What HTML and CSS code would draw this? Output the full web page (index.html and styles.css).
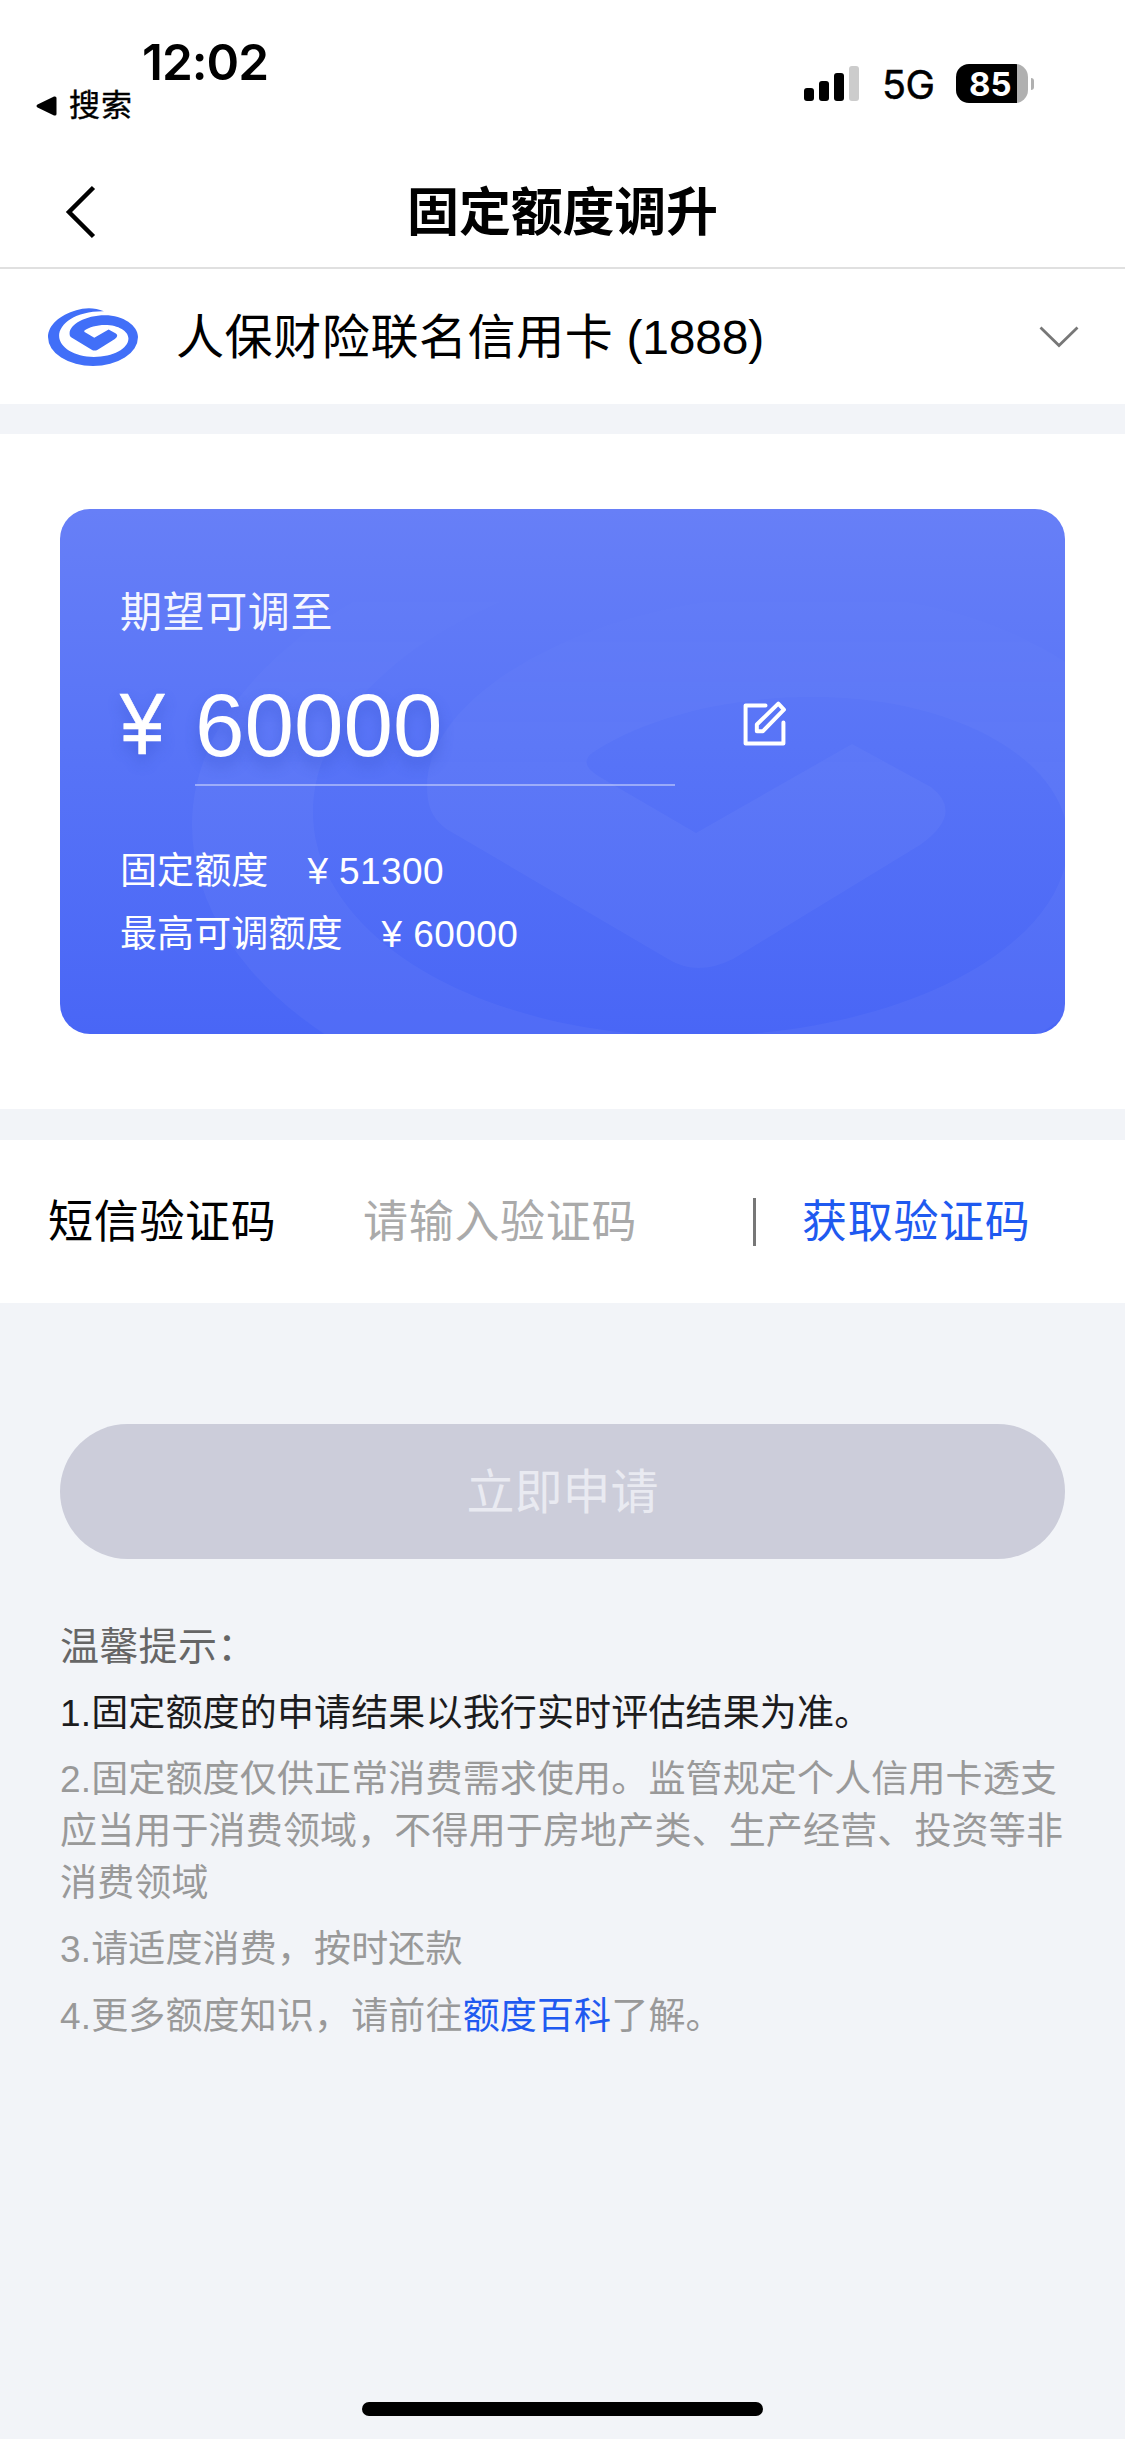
FILE: index.html
```html
<!DOCTYPE html>
<html lang="zh-CN">
<head>
<meta charset="utf-8">
<title>固定额度调升</title>
<link rel="stylesheet" href="styles.css">
</head>
<body>
<svg width="0" height="0" class="defs" aria-hidden="true">
  <symbol id="swirl" viewBox="192 516 980 614" preserveAspectRatio="none">
    <path d="M801 550C700 508 590 510 500 540C320 590 192 700 192 824A490 306 0 0 0 1172 824C1172 700 1010 592 812 592C600 592 427 690 427 785C427 805 432 818 448 829L668 958Q697 976 733 958L920 844Q965 812 931 786L852 743L696 832L600 776Q578 763 592 752C640 720 720 696 812 696C960 696 1068 762 1068 840C1068 946 900 1035 692 1035C480 1035 313 935 313 811C313 680 500 545 801 550Z"/>
  </symbol>
</svg>
<div class="screen">
  <header class="status">
    <div class="status-left">
      <div class="time">12:02</div>
      <div class="return">
        <svg width="21" height="20" viewBox="0 0 21 20"><path d="M1.5 8.6 18 .6Q20.500 0 20.500 2V18Q20.500 20 18 19.400L1.500 11.400Q-.5 10 1.500 8.600Z"/></svg>
        <span>搜索</span>
      </div>
    </div>
    <div class="status-right">
      <div class="signal"><i class="s1"></i><i class="s2"></i><i class="s3"></i><i class="s4"></i></div>
      <span class="net">5G</span>
      <div class="battery"><span>85</span></div>
      <i class="nub"></i>
    </div>
  </header>
  <nav class="nav">
    <svg class="back" width="32" height="54" viewBox="0 0 32 54"><path d="M28.500 2.500 4 27 28.500 51.500" fill="none" stroke="#000" stroke-width="4.500"/></svg>
    <h1>固定额度调升</h1>
  </nav>
  <section class="picker">
    <svg class="logo" width="90" height="58"><use href="#swirl"/></svg>
    <span class="picker-name">人保财险联名信用卡<span class="digits"> (1888)</span></span>
    <svg class="down" width="40" height="22" viewBox="0 0 40 22"><path d="M1.500 1.500 20 19.500 38.500 1.500" fill="none" stroke="#777" stroke-width="2.800"/></svg>
  </section>
  <section class="quota">
    <div class="card">
      <svg class="mark" viewBox="60 508 1005 526"><use href="#swirl" x="192" y="516" width="980" height="614"/></svg>
      <div class="card-title">期望可调至</div>
      <div class="amount">
        <span class="yen">¥</span>
        <span class="value">60000</span>
        <svg class="edit" width="45" height="45" viewBox="0 0 44 44" fill="none" stroke="#fff" stroke-width="3.900" stroke-linejoin="round" stroke-linecap="round"><path d="M23 4.500H3.500V41.500H40.500V21"/><path d="M14.500 29.500V23L35.500 2.500 41 8.500 20.500 29.500Z"/></svg>
      </div>
      <div class="line"><span>固定额度</span><span>¥ 51300</span></div>
      <div class="line"><span>最高可调额度</span><span>¥ 60000</span></div>
    </div>
  </section>
  <section class="sms">
    <span class="sms-label">短信验证码</span>
    <span class="sms-input">请输入验证码</span>
    <i class="bar"></i>
    <a class="sms-get">获取验证码</a>
  </section>
  <div class="submit">立即申请</div>
  <section class="tips">
    <h2>温馨提示：</h2>
    <p class="strong">1.固定额度的申请结果以我行实时评估结果为准。</p>
    <p>2.固定额度仅供正常消费需求使用。监管规定个人信用卡透支<br>应当用于消费领域，不得用于房地产类、生产经营、投资等非<br>消费领域</p>
    <p>3.请适度消费，按时还款</p>
    <p>4.更多额度知识，请前往<a>额度百科</a>了解。</p>
  </section>
  <div class="home"></div>
</div>
</body>
</html>
```

FILE: styles.css
```css
* { box-sizing: border-box; margin: 0; padding: 0; }
body { background: #f2f4f8; font-family: "Liberation Sans", "Noto Sans CJK SC", sans-serif; color: #000; }
.defs { display: block; }
.screen { width: 1125px; height: 2439px; display: flex; flex-direction: column; overflow: hidden; white-space: nowrap; }
svg, i { display: block; flex: none; }

.status { height: 157px; background: #fff; display: flex; justify-content: space-between; }
.status-left { padding: 32px 0 0 36px; }
.time { font: 600 49.500px/60px Inter, sans-serif; padding-left: 106px; letter-spacing: -1px; }
.return { display: flex; align-items: center; gap: 12px; font-size: 31px; line-height: 32px; letter-spacing: 1px; margin-top: -2px; -webkit-text-stroke: 0.400px #000; }
.status-right { height: 39px; margin: 64px 91px 0 0; display: flex; align-items: center; }
.signal { display: flex; align-items: flex-end; gap: 5px; height: 35px; margin-right: 23px; }
.signal i { width: 10px; border-radius: 3px; background: #000; }
.signal .s1 { height: 13px; }
.signal .s2 { height: 20px; }
.signal .s3 { height: 28px; }
.signal .s4 { height: 35px; background: #ccc; }
.net { font: 400 39.500px/40px Inter, sans-serif; letter-spacing: -0.500px; width: 52px; margin-right: 22px; padding-top: 3px; -webkit-text-stroke: 0.500px #000; }
.battery { width: 72px; height: 39px; border-radius: 13px; background: linear-gradient(90deg, #000 61px, #b0b0b0 61px); color: #fff; font: 700 33px/40px Inter, sans-serif; padding-left: 13px; }
.nub { width: 3px; height: 12px; margin-left: 3px; border-radius: 0 4px 4px 0; background: #b0b0b0; }

.nav { height: 112px; background: #fff; border-bottom: 2px solid #e0e0e0; display: grid; grid-template-columns: 110px 1fr 110px; align-items: center; }
.back { margin-left: 65px; }
.nav h1 { font-size: 52px; line-height: 60px; font-weight: 700; text-align: center; letter-spacing: -0.200px; padding-top: 2px; }

.picker { height: 135px; background: #fff; display: flex; align-items: center; padding: 0 46px 0 48px; }
.logo { fill: #416ff8; }
.picker-name { flex: 1; margin-left: 38px; font-size: 48px; letter-spacing: 0.600px; line-height: 60px; padding-top: 2px; }
.digits { letter-spacing: -0.200px; }

.quota { height: 675px; margin-top: 30px; background: #fff; padding: 75px 60px 0; }
.card { position: relative; height: 525px; border-radius: 30px; overflow: hidden; padding: 79px 60px 0; color: #fff; background: linear-gradient(#677ff7, #5874f7 45%, #4966f6); }
.card > div { position: relative; }
.mark { position: absolute; inset: 0; width: 1005px; height: 526px; fill: rgba(255, 255, 255, 0.04); -webkit-mask-image: linear-gradient(transparent 12%, #000 50%); mask-image: linear-gradient(transparent 12%, #000 50%); }
.card-title { font-size: 42px; line-height: 50px; letter-spacing: 0.600px; color: #f4f6ff; }
.amount { height: 149px; display: flex; align-items: flex-start; text-shadow: 0 8px 14px rgba(50, 80, 200, 0.45); }
.yen { width: 75px; font-size: 87px; line-height: 100px; margin-top: 36px; }
.yen { display: block; transform: scaleX(0.92); transform-origin: 0 0; -webkit-text-stroke: 0.600px #fff; }
.value { width: 480px; height: 148px; font-size: 89px; line-height: 100px; padding-top: 37px; border-bottom: 2px solid rgba(255, 255, 255, 0.4); }
.edit { margin: 63px 0 0 67px; }
.line { height: 62.500px; font-size: 37px; line-height: 63px; display: flex; gap: 39px; letter-spacing: 0.100px; }
.line span + span { letter-spacing: 0.400px; }
.amount + .line { margin-top: 53px; }

.sms { height: 163px; margin-top: 31px; background: #fff; display: flex; align-items: center; padding: 0 48px; font-size: 45px; line-height: 60px; letter-spacing: 0.700px; }
.sms span, .sms a { padding-top: 3px; }
.sms-label { width: 315px; }
.sms-input { width: 390px; color: #aaa; }
.bar { width: 3px; height: 48px; background: #777; }
.sms-get { margin-left: 46px; color: #1f5af0; }

.submit { height: 135px; margin: 121px 60px 0; border-radius: 68px; background: #cccdda; color: #e9eaf1; font-size: 48px; line-height: 137px; text-align: center; }

.tips { padding: 62px 60px 0; color: #999; font-size: 37px; line-height: 51.800px; letter-spacing: 0.150px; }
.tips h2 { font-size: 39px; line-height: 52px; font-weight: 400; color: #666; letter-spacing: 0.300px; }
.tips p { margin-top: 14.700px; }
.tips .strong { color: #1c1c1e; }
.tips a { color: #1f5af0; }

.home { width: 401px; height: 14px; border-radius: 7px; background: #000; margin: auto auto 23px; }
```
